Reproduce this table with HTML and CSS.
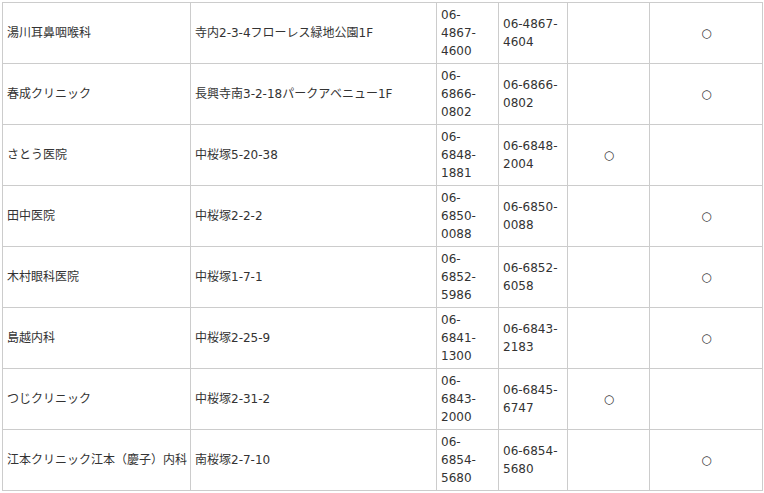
FILE: index.html
```html
<!DOCTYPE html>
<html lang="ja">
<head>
<meta charset="utf-8">
<title>医療機関一覧</title>
<link rel="stylesheet" href="styles.css">
</head>
<body>
<table class="clinics">
  <colgroup>
    <col class="c-name">
    <col class="c-addr">
    <col class="c-tel">
    <col class="c-fax">
    <col class="c-mark">
    <col class="c-mark2">
  </colgroup>
  <tbody>
    <tr><td>湯川耳鼻咽喉科</td><td>寺内2-3-4フローレス緑地公園1F</td><td>06-4867-4600</td><td>06-4867-4604</td><td class="mark"></td><td class="mark">○</td></tr>
    <tr><td>春成クリニック</td><td>長興寺南3-2-18パークアベニュー1F</td><td>06-6866-0802</td><td>06-6866-0802</td><td class="mark"></td><td class="mark">○</td></tr>
    <tr><td>さとう医院</td><td>中桜塚5-20-38</td><td>06-6848-1881</td><td>06-6848-2004</td><td class="mark">○</td><td class="mark"></td></tr>
    <tr><td>田中医院</td><td>中桜塚2-2-2</td><td>06-6850-0088</td><td>06-6850-0088</td><td class="mark"></td><td class="mark">○</td></tr>
    <tr><td>木村眼科医院</td><td>中桜塚1-7-1</td><td>06-6852-5986</td><td>06-6852-6058</td><td class="mark"></td><td class="mark">○</td></tr>
    <tr><td>島越内科</td><td>中桜塚2-25-9</td><td>06-6841-1300</td><td>06-6843-2183</td><td class="mark"></td><td class="mark">○</td></tr>
    <tr><td>つじクリニック</td><td>中桜塚2-31-2</td><td>06-6843-2000</td><td>06-6845-6747</td><td class="mark">○</td><td class="mark"></td></tr>
    <tr><td>江本クリニック江本（慶子）内科</td><td>南桜塚2-7-10</td><td>06-6854-5680</td><td>06-6854-5680</td><td class="mark"></td><td class="mark">○</td></tr>
  </tbody>
</table>
</body>
</html>
```
FILE: styles.css
```css
html, body {
  margin: 0;
  padding: 0;
  background: #fff;
}
body {
  padding: 2px 0 0 2px;
  font-family: "DejaVu Sans", "Noto Sans CJK JP", sans-serif;
  font-size: 12px;
  color: #333;
}
.clinics {
  border-collapse: collapse;
  table-layout: fixed;
  width: 760px;
}
.c-name { width: 188px; }
.c-addr { width: 246px; }
.c-tel { width: 62px; }
.c-fax { width: 69px; }
.c-mark { width: 82px; }
.c-mark2 { width: 113px; }
.clinics td {
  border: 1px solid #ccc;
  padding: 3px 3px 3px 4px;
  line-height: 18px;
  vertical-align: middle;
  height: 54px;
  white-space: normal;
  word-break: normal;
}
.clinics td.mark {
  text-align: center;
}
```
